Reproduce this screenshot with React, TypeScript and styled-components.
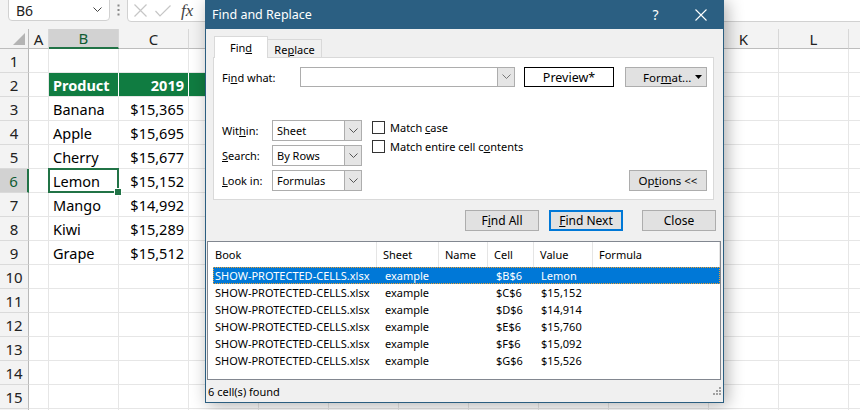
import React from 'react'
import styled, { createGlobalStyle } from 'styled-components'

const UI = '"Noto Sans", "Liberation Sans", Arial, sans-serif'

const GlobalStyle = createGlobalStyle`
  html, body { margin: 0; padding: 0; background: #ffffff; }
  #root { width: 860px; height: 410px; }
`

const Page = styled.div`
  position: relative;
  width: 860px;
  height: 410px;
  overflow: hidden;
  background: #ffffff;
  font-family: ${UI};
`

/* ---------- formula bar ---------- */

const FormulaBar = styled.div`
  display: flex;
  align-items: flex-start;
  height: 29px;
  box-sizing: border-box;
  padding-left: 8px;
  background: #f3f3f3;
`

const NameBox = styled.div`
  width: 102px;
  height: 25px;
  margin-top: -4px;
  box-sizing: border-box;
  padding: 3px 7px 0 7px;
  display: flex;
  align-items: center;
  justify-content: space-between;
  background: #ffffff;
  border: 1px solid #d1d1d1;
  border-radius: 4px;
  font-size: 14px;
  color: #222;
`

const Grip = styled.svg`
  margin: 4px 0 0 7px;
  flex: none;
`

const FormulaInput = styled.div`
  flex: 1;
  height: 26px;
  margin: -4px -10px 0 7px;
  box-sizing: border-box;
  padding: 3px 0 0 6px;
  display: flex;
  align-items: center;
  gap: 8px;
  background: #ffffff;
  border: 1px solid #d1d1d1;
  border-radius: 4px;
`

const Fx = styled.span`
  font-family: "Liberation Serif", "DejaVu Serif", serif;
  font-style: italic;
  font-size: 17px;
  color: #444;
  margin-left: 2px;
`

/* ---------- sheet grid ---------- */

const WIDTHS = [29, 20, 70, 70, 70, 70, 70, 70, 70, 70, 100, 70, 70, 70]
const LETTERS = ['A', 'B', 'C', 'D', 'E', 'F', 'G', 'H', 'I', 'J', 'K', 'L', 'M']

const Grid = styled.div`
  display: grid;
  grid-template-columns: ${WIDTHS.map(w => w + 'px').join(' ')};
  grid-template-rows: 20px;
  grid-auto-rows: 24px;
  font-size: 14.5px;
  color: #000;
`

const Corner = styled.div`
  background: #f3f3f3;
  border-right: 1px solid #b9b9b9;
  border-bottom: 1px solid #bdbdbd;
  display: flex;
  align-items: flex-end;
  justify-content: flex-end;
  padding: 0 3px 3px 0;
`

const ColHead = styled.div<{ $active?: boolean }>`
  display: flex;
  align-items: center;
  justify-content: center;
  background: ${p => (p.$active ? '#d2d2d2' : '#f3f3f3')};
  color: ${p => (p.$active ? '#0f5c33' : '#222')};
  border-right: 1px solid #d7d7d7;
  border-bottom: ${p => (p.$active ? '2px solid #217346' : '1px solid #bdbdbd')};
  font-size: 15px;
`

const RowHead = styled.div<{ $active?: boolean }>`
  display: flex;
  align-items: center;
  justify-content: center;
  background: ${p => (p.$active ? '#d2d2d2' : '#f3f3f3')};
  color: ${p => (p.$active ? '#0f5c33' : '#222')};
  border-right: ${p => (p.$active ? '2px solid #217346' : '1px solid #b9b9b9')};
  border-bottom: 1px solid #dadada;
  font-size: 15px;
`

const Cell = styled.div<{ $fill?: boolean; $right?: boolean; $bold?: boolean; $selected?: boolean }>`
  position: relative;
  display: flex;
  align-items: center;
  justify-content: ${p => (p.$right ? 'flex-end' : 'flex-start')};
  padding: 0 4px;
  white-space: nowrap;
  background: ${p => (p.$fill ? '#107c41' : '#ffffff')};
  color: ${p => (p.$fill ? '#ffffff' : '#000')};
  font-weight: ${p => (p.$bold ? 700 : 400)};
  border-right: 1px solid ${p => (p.$fill ? '#ffffff' : '#e6e6e6')};
  border-bottom: 1px solid #e6e6e6;

  ${p =>
    p.$selected &&
    `
    &::after {
      content: '';
      position: absolute;
      left: -1px;
      top: -1px;
      right: -1px;
      bottom: -1px;
      border: 2px solid #217346;
    }
    &::before {
      content: '';
      position: absolute;
      right: -4px;
      bottom: -4px;
      width: 6px;
      height: 6px;
      background: #217346;
      border: 1px solid #fff;
      z-index: 1;
    }
  `}
`

type RowData = { b?: string; c?: string }
const DATA: Record<number, RowData> = {
  2: { b: 'Product', c: '2019' },
  3: { b: 'Banana', c: '$15,365' },
  4: { b: 'Apple', c: '$15,695' },
  5: { b: 'Cherry', c: '$15,677' },
  6: { b: 'Lemon', c: '$15,152' },
  7: { b: 'Mango', c: '$14,992' },
  8: { b: 'Kiwi', c: '$15,289' },
  9: { b: 'Grape', c: '$15,512' },
}

/* ---------- dialog ---------- */

const Dialog = styled.div`
  position: absolute;
  left: 205px;
  top: 0;
  width: 519px;
  height: 403px;
  box-sizing: border-box;
  display: flex;
  flex-direction: column;
  background: #f0f0f0;
  border: 1px solid #2b5e80;
  border-top: none;
  box-shadow: 3px 2px 16px rgba(0, 0, 0, 0.32);
  font-size: 11px;
  color: #000;
`

const TitleBar = styled.div`
  height: 29px;
  flex: none;
  display: flex;
  align-items: center;
  padding-left: 6px;
  background: #2b5f82;
  color: #ffffff;
  font-size: 12.5px;
`

const TitleText = styled.span`
  flex: 1;
`

const TitleButton = styled.div`
  width: 45px;
  height: 29px;
  display: flex;
  align-items: center;
  justify-content: center;
  font-size: 14px;
`

const Tabs = styled.div`
  position: relative;
  z-index: 1;
  display: flex;
  align-items: flex-end;
  height: 22px;
  margin: 7px 0 0 8px;
`

const Tab = styled.div<{ $active?: boolean }>`
  width: ${p => (p.$active ? 54 : 55)}px;
  height: ${p => (p.$active ? 22 : 19)}px;
  margin-left: ${p => (p.$active ? 0 : -1)}px;
  box-sizing: border-box;
  display: flex;
  align-items: center;
  justify-content: center;
  padding-top: ${p => (p.$active ? 0 : 1)}px;
  background: ${p => (p.$active ? '#ffffff' : '#f0f0f0')};
  border: 1px solid #d9d9d9;
  border-bottom: ${p => (p.$active ? 'none' : '1px solid #d9d9d9')};
`

const Panel = styled.div`
  height: 143px;
  margin: -1px 9px 0 7px;
  box-sizing: border-box;
  padding: 9px 6px 0 8px;
  display: flex;
  flex-direction: column;
  background: #ffffff;
  border: 1px solid #d9d9d9;
`

const FindRow = styled.div`
  display: flex;
  align-items: center;
  height: 20px;
`

const Label = styled.span<{ $w: number }>`
  width: ${p => p.$w}px;
  flex: none;
  white-space: nowrap;
`

const Combo = styled.div<{ $w: number; $h: number }>`
  width: ${p => p.$w}px;
  height: ${p => p.$h}px;
  box-sizing: border-box;
  display: flex;
  background: #ffffff;
  border: 1px solid #adadad;
`

const ComboText = styled.span`
  flex: 1;
  display: flex;
  align-items: center;
  padding-left: 4px;
`

const ComboArrow = styled.span`
  width: 16px;
  display: flex;
  align-items: center;
  justify-content: center;
  background: #e5e5e5;
  border-left: 1px solid #adadad;
`

const Preview = styled.div`
  width: 90px;
  height: 20px;
  margin-left: 9px;
  box-sizing: border-box;
  display: flex;
  align-items: center;
  justify-content: center;
  border: 1px solid #000;
  font-size: 12.5px;
`

const Button = styled.div<{ $w: number; $h?: number; $default?: boolean }>`
  width: ${p => p.$w}px;
  height: ${p => p.$h ?? 21}px;
  box-sizing: border-box;
  display: flex;
  align-items: center;
  justify-content: center;
  flex: none;
  background: #e1e1e1;
  border: ${p => (p.$default ? '2px solid #0078d7' : '1px solid #adadad')};
  font-size: 12px;
  white-space: nowrap;
`

const FormatButton = styled(Button)`
  margin-left: 11px;
  justify-content: space-between;
  padding: 0 4px 0 17px;
  font-size: 11.5px;
`

const OptionsArea = styled.div`
  display: flex;
  margin-top: 33px;
`

const SelectGrid = styled.div`
  display: grid;
  grid-template-columns: 50px 90px;
  grid-auto-rows: 21px;
  row-gap: 4px;
  align-items: center;
`

const Checks = styled.div`
  display: flex;
  flex-direction: column;
  gap: 6px;
  margin: 1px 0 0 10px;
`

const CheckRow = styled.label`
  display: flex;
  align-items: center;
  gap: 5px;
  height: 13px;
`

const Box = styled.span`
  width: 13px;
  height: 13px;
  box-sizing: border-box;
  border: 1px solid #333;
  background: #fff;
`

const OptionsButton = styled(Button)`
  margin-left: auto;
  align-self: flex-end;
  font-size: 11.5px;
`

const ButtonRow = styled.div`
  display: flex;
  justify-content: flex-end;
  margin: 10px 7px 0 0;
  font-size: 11.5px;
`

const Results = styled.div`
  height: 139px;
  margin: 10px 2px 0 1px;
  box-sizing: border-box;
  background: #ffffff;
  border: 1px solid #828790;
  overflow: hidden;
`

const HeaderRow = styled.div`
  display: grid;
  grid-template-columns: 169px 62px 49px 46px 59px 1fr;
  height: 25px;
`

const HeaderCell = styled.div`
  display: flex;
  align-items: center;
  padding-left: 6px;
  border-right: 1px solid #e5e5e5;
`

const ResultRow = styled.div<{ $selected?: boolean }>`
  display: grid;
  grid-template-columns: 164px 62px 49px 46px 59px 1fr;
  height: 17px;
  margin-left: 5px;
  box-sizing: border-box;
  background: ${p => (p.$selected ? '#0078d7' : 'transparent')};
  color: ${p => (p.$selected ? '#ffffff' : '#000')};
  border: 1px dotted ${p => (p.$selected ? '#f0a030' : 'transparent')};
`

const ResultCell = styled.div<{ $pad: number }>`
  display: flex;
  align-items: center;
  padding-left: ${p => p.$pad}px;
  white-space: nowrap;
`

const StatusBar = styled.div`
  flex: 1;
  display: flex;
  align-items: center;
  justify-content: space-between;
  padding: 0 2px 0 2px;
`

const Chevron = ({ color = '#555' }: { color?: string }) => (
  <svg width="9" height="6" viewBox="0 0 9 6">
    <polyline points="0.5,0.5 4.5,4.5 8.5,0.5" fill="none" stroke={color} strokeWidth="1" />
  </svg>
)

const RESULTS = [
  ['$B$6', 'Lemon'],
  ['$C$6', '$15,152'],
  ['$D$6', '$14,914'],
  ['$E$6', '$15,760'],
  ['$F$6', '$15,092'],
  ['$G$6', '$15,526'],
]

function Sheet() {
  const rows = Array.from({ length: 16 }, (_, i) => i + 1)
  return (
    <Grid>
      <Corner>
        <svg width="12" height="12" viewBox="0 0 12 12">
          <polygon points="12,0 12,12 0,12" fill="#b4b4b4" />
        </svg>
      </Corner>
      {LETTERS.map(l => (
        <ColHead key={l} $active={l === 'B'}>
          {l === 'M' ? '' : l}
        </ColHead>
      ))}
      {rows.map(r => {
        const d = DATA[r] || {}
        const head = r === 2
        return (
          <React.Fragment key={r}>
            <RowHead $active={r === 6}>{r}</RowHead>
            {LETTERS.map(l => {
              if (l === 'B')
                return (
                  <Cell key={l} $fill={head} $bold={head} $selected={r === 6}>
                    {d.b}
                  </Cell>
                )
              if (l === 'C')
                return (
                  <Cell key={l} $fill={head} $bold={head} $right>
                    {d.c}
                  </Cell>
                )
              return <Cell key={l} $fill={head && l === 'D'} />
            })}
          </React.Fragment>
        )
      })}
    </Grid>
  )
}

function FindReplace() {
  return (
    <Dialog>
      <TitleBar>
        <TitleText>Find and Replace</TitleText>
        <TitleButton>?</TitleButton>
        <TitleButton>
          <svg width="12" height="12" viewBox="0 0 12 12">
            <path d="M0.5 0.5 L11.5 11.5 M11.5 0.5 L0.5 11.5" stroke="#fff" strokeWidth="1.1" />
          </svg>
        </TitleButton>
      </TitleBar>

      <Tabs>
        <Tab $active>
          Fin<u>d</u>
        </Tab>
        <Tab>
          Re<u>p</u>lace
        </Tab>
      </Tabs>

      <Panel>
        <FindRow>
          <Label $w={78}>
            Fi<u>n</u>d what:
          </Label>
          <Combo $w={215} $h={20}>
            <ComboText />
            <ComboArrow>
              <Chevron color="#777" />
            </ComboArrow>
          </Combo>
          <Preview>Preview*</Preview>
          <FormatButton $w={82} $h={20}>
            <span>
              For<u>m</u>at...
            </span>
            <svg width="7" height="4" viewBox="0 0 7 4">
              <polygon points="0,0 7,0 3.5,4" fill="#000" />
            </svg>
          </FormatButton>
        </FindRow>

        <OptionsArea>
          <SelectGrid>
            <Label $w={50}>
              Wit<u>h</u>in:
            </Label>
            <Combo $w={90} $h={21}>
              <ComboText>Sheet</ComboText>
              <ComboArrow>
                <Chevron />
              </ComboArrow>
            </Combo>
            <Label $w={50}>
              <u>S</u>earch:
            </Label>
            <Combo $w={90} $h={21}>
              <ComboText>By Rows</ComboText>
              <ComboArrow>
                <Chevron />
              </ComboArrow>
            </Combo>
            <Label $w={50}>
              <u>L</u>ook in:
            </Label>
            <Combo $w={90} $h={21}>
              <ComboText>Formulas</ComboText>
              <ComboArrow>
                <Chevron />
              </ComboArrow>
            </Combo>
          </SelectGrid>
          <Checks>
            <CheckRow>
              <Box />
              <span>
                Match <u>c</u>ase
              </span>
            </CheckRow>
            <CheckRow>
              <Box />
              <span>
                Match entire cell c<u>o</u>ntents
              </span>
            </CheckRow>
          </Checks>
          <OptionsButton $w={78}>
            Op<u>t</u>ions &lt;&lt;
          </OptionsButton>
        </OptionsArea>
      </Panel>

      <ButtonRow>
        <Button $w={74}>
          F<u>i</u>nd All
        </Button>
        <Button $w={74} $default style={{ marginLeft: 10 }}>
          <u>F</u>ind Next
        </Button>
        <Button $w={74} style={{ marginLeft: 19 }}>
          Close
        </Button>
      </ButtonRow>

      <Results>
        <HeaderRow>
          <HeaderCell style={{ paddingLeft: 7 }}>Book</HeaderCell>
          <HeaderCell>Sheet</HeaderCell>
          <HeaderCell>Name</HeaderCell>
          <HeaderCell>Cell</HeaderCell>
          <HeaderCell>Value</HeaderCell>
          <HeaderCell>Formula</HeaderCell>
        </HeaderRow>
        {RESULTS.map(([cell, value], i) => (
          <ResultRow key={cell} $selected={i === 0}>
            <ResultCell $pad={1}>SHOW-PROTECTED-CELLS.xlsx</ResultCell>
            <ResultCell $pad={7}>example</ResultCell>
            <ResultCell $pad={7} />
            <ResultCell $pad={7}>{cell}</ResultCell>
            <ResultCell $pad={6}>{value}</ResultCell>
            <ResultCell $pad={6} />
          </ResultRow>
        ))}
      </Results>

      <StatusBar>
        <span>6 cell(s) found</span>
        <svg width="8" height="8" viewBox="0 0 8 8">
          <rect x="6" y="0" width="2" height="2" fill="#a0a0a0" />
          <rect x="3" y="3" width="2" height="2" fill="#a0a0a0" />
          <rect x="6" y="3" width="2" height="2" fill="#a0a0a0" />
          <rect x="0" y="6" width="2" height="2" fill="#a0a0a0" />
          <rect x="3" y="6" width="2" height="2" fill="#a0a0a0" />
          <rect x="6" y="6" width="2" height="2" fill="#a0a0a0" />
        </svg>
      </StatusBar>
    </Dialog>
  )
}

export default function App() {
  return (
    <Page>
      <GlobalStyle />
      <FormulaBar>
        <NameBox>
          <span>B6</span>
          <Chevron color="#444" />
        </NameBox>
        <Grip width="3" height="12" viewBox="0 0 3 12">
          <rect x="0.5" y="0.5" width="2" height="2" fill="#888" />
          <rect x="0.5" y="5" width="2" height="2" fill="#888" />
          <rect x="0.5" y="9.5" width="2" height="2" fill="#888" />
        </Grip>
        <FormulaInput>
          <svg width="13" height="13" viewBox="0 0 13 13">
            <path d="M0.5 0.5 L12.5 12.5 M12.5 0.5 L0.5 12.5" stroke="#c6c6c6" strokeWidth="1.2" />
          </svg>
          <svg width="16" height="12" viewBox="0 0 16 12">
            <polyline points="0.5,6 5,11 15.5,0.5" fill="none" stroke="#c6c6c6" strokeWidth="1.2" />
          </svg>
          <Fx>fx</Fx>
        </FormulaInput>
      </FormulaBar>
      <Sheet />
      <FindReplace />
    </Page>
  )
}
